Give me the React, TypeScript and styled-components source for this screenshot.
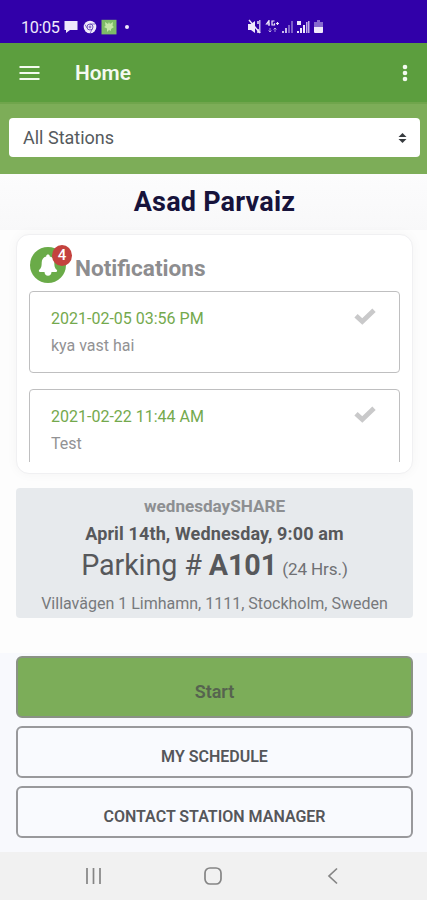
import React from "react";
import styled, { createGlobalStyle } from "styled-components";

const GlobalStyle = createGlobalStyle`
  * { box-sizing: border-box; }
  body { margin: 0; background: #fdfdfe; font-family: Roboto, "Liberation Sans", sans-serif; }
  button { font-family: inherit; }
`;

const Screen = styled.div`
  width: 427px;
  height: 900px;
  display: flex;
  flex-direction: column;
  overflow: hidden;
  background: #fdfdfd;
`;

const StatusBar = styled.div`
  height: 43px;
  flex: none;
  display: flex;
  justify-content: space-between;
  padding: 17px 103px 0 21px;
  background: #3100a9;
  color: #efe9fb;
`;

const StatusGroup = styled.div<{ $gap: number }>`
  display: flex;
  align-items: center;
  gap: ${(p) => p.$gap}px;
  height: 20px;
`;

const Clock = styled.span`
  font-size: 16.3px;
  line-height: 20px;
  padding-top: 2px;
  letter-spacing: -0.4px;
`;

const Icon = styled.svg`
  display: block;
  flex: none;
`;

const AppBar = styled.header`
  height: 59px;
  flex: none;
  display: flex;
  align-items: center;
  padding: 0 19px;
  background: #5c9e3e;
  color: #f4faf0;
`;

const AppTitle = styled.h1`
  flex: 1;
  margin: 1px 0 0 35px;
  font-size: 20.9px;
  font-weight: 600;
  line-height: 26px;
`;

const FilterBar = styled.div`
  height: 72px;
  flex: none;
  padding: 14px 7px 0 9px;
  background: #7dad58;
  border-top: 2px solid #70a54c;
`;

const StationSelect = styled.div`
  height: 39px;
  display: flex;
  align-items: center;
  justify-content: space-between;
  padding: 0 13px 0 14px;
  border-radius: 4px;
  background: #fff;
  color: #555a5d;
  font-size: 18px;
`;

const UserName = styled.h2`
  margin: 0;
  height: 56px;
  flex: none;
  padding-left: 2px;
  background: linear-gradient(#fcfcfd, #f8f8f9);
  color: #17133b;
  font-size: 27px;
  font-weight: 700;
  letter-spacing: 0.2px;
  line-height: 56px;
  text-align: center;
`;

const Content = styled.main`
  flex: 1;
  display: flex;
  flex-direction: column;
  gap: 14px;
  padding: 4px 14px 0 16px;
`;

const NotificationCard = styled.section`
  height: 240px;
  padding: 11px 12px 0;
  border: 1px solid #f0f0f2;
  border-radius: 13px;
  background: #fff;
  box-shadow: 0 0 12px rgba(40, 40, 60, 0.04);
`;

const CardHeader = styled.div`
  height: 45px;
  display: flex;
  gap: 9px;
  padding-left: 1px;
`;

const BellBadge = styled.div`
  position: relative;
  width: 36px;
  height: 36px;
  margin-top: 1px;
  display: flex;
  align-items: center;
  justify-content: center;
  border-radius: 50%;
  background: #6aab48;
  color: #fff;
`;

const Count = styled.span`
  position: absolute;
  top: -2px;
  left: 22px;
  width: 20px;
  height: 21px;
  border-radius: 50%;
  background: #c4423e;
  color: #fff;
  font-size: 15px;
  font-weight: 500;
  line-height: 21px;
  text-align: center;
`;

const CardTitle = styled.h3`
  margin: 9px 0 0;
  color: #8d8d8f;
  font-size: 22.6px;
  font-weight: 700;
  line-height: 28px;
`;

const NotificationList = styled.div`
  height: 171px;
  display: flex;
  flex-direction: column;
  gap: 16px;
  overflow: hidden;
`;

const NotificationItem = styled.article`
  height: 82px;
  flex: none;
  display: flex;
  justify-content: space-between;
  padding: 13px 23px 0 21px;
  border: 1px solid #bfbfc0;
  border-radius: 4px;
`;

const NotificationText = styled.p<{ $date?: boolean }>`
  margin: 0;
  color: ${(p) => (p.$date ? "#74a94d" : "#929294")};
  font-size: 16px;
  line-height: 27px;
`;

const ParkingCard = styled.section`
  height: 130px;
  display: flex;
  flex-direction: column;
  align-items: center;
  padding-top: 5px;
  border-radius: 4px;
  background: #e7eaed;
  color: #57585b;
  white-space: nowrap;
`;

const ShareName = styled.div`
  font-size: 17.1px;
  font-weight: 700;
  line-height: 27px;
  color: #8d8f92;
`;

const ParkingDate = styled.div`
  font-size: 18px;
  font-weight: 700;
  letter-spacing: 0.13px;
  line-height: 28px;
`;

const ParkingSpot = styled.div`
  font-size: 28.7px;
  line-height: 34px;
  letter-spacing: -0.1px;
  b { font-weight: 700; }
  small { margin-left: -2px; font-size: 17.1px; color: #707174; }
`;

const Address = styled.div`
  margin-top: 4px;
  font-size: 16px;
  line-height: 27px;
  color: #77797c;
`;

const Actions = styled.footer`
  height: 199px;
  flex: none;
  display: flex;
  flex-direction: column;
  padding: 3px 14px 0 16px;
  gap: 8px;
  background: #f8f9fd;
`;

const ActionButton = styled.button<{ $primary?: boolean }>`
  height: ${(p) => (p.$primary ? 62 : 52)}px;
  flex: none;
  padding: 8px 0 0;
  border: 2px solid ${(p) => (p.$primary ? "#8a9285" : "#99999c")};
  border-radius: 6px;
  background: ${(p) => (p.$primary ? "#7cad59" : "#f9fafe")};
  color: ${(p) => (p.$primary ? "#56634f" : "#55565a")};
  font-size: ${(p) => (p.$primary ? 18 : 16)}px;
  font-weight: 600;
`;

const NavBar = styled.nav`
  height: 48px;
  flex: none;
  display: flex;
  align-items: center;
  justify-content: space-between;
  padding: 0 88px 0 85px;
  background: #f1f1f1;
  color: #858585;
`;

const HomeIcon = styled(Icon)`
  margin-right: 3px;
`;

const notifications = [
  { date: "2021-02-05 03:56 PM", text: "kya vast hai" },
  { date: "2021-02-22 11:44 AM", text: "Test" },
];

const CheckMark = () => (
  <Icon width="22" height="20" viewBox="0 0 22 20" aria-label="Mark as read">
    <path d="M2 10.700 8.300 16.500 20 5.200" fill="none" stroke="#c9c9ca" strokeWidth="4.800" />
  </Icon>
);

const LeftStatusIcons = () => (
  <>
    <Icon width="14" height="14" viewBox="0 0 14 14">
      <path d="M.5 1h13v9H6l-4 3v-3H.5z" fill="currentColor" />
    </Icon>
    <Icon width="14" height="14" viewBox="0 0 14 14">
      <circle cx="7" cy="7" r="6.3" fill="currentColor" />
      <circle cx="7" cy="7" r="3" fill="none" stroke="#6c50bd" strokeWidth="1" />
      <path d="M7 4h5M4.400 8.500 2 4.600M9.500 8.500 7.200 13" stroke="#6c50bd" strokeWidth=".8" />
      <circle cx="7" cy="7" r="1.400" fill="#8e76cd" />
    </Icon>
    <Icon width="16" height="16" viewBox="0 0 16 16">
      <path d="M.5.8h15v14.600H.5z" fill="#7dbb68" />
      <path d="m4 3 3 2 1-2 1 2 3-2-.5 4 1.500 1-3 2v2L8 11l-2 2V9.500L3 8l1.500-1z" fill="#c5e7a8" />
    </Icon>
    <Icon width="10" height="14" viewBox="0 0 10 14">
      <circle cx="5" cy="7" r="2" fill="currentColor" />
    </Icon>
  </>
);

const RightStatusIcons = () => (
  <Icon width="76" height="16" viewBox="0 0 76 16" fill="currentColor">
    <path d="M0 5h3l4-3v12l-4-3H0z" />
    <path d="m1 1 11 13" stroke="currentColor" strokeWidth="1.400" />
    <path d="M9 2h2v3H9zm0 8h2v4H9zM11 1h1.500v13H11z" opacity=".75" />
    <path d="M21 1.500 18.500 5H22M21 1v6M26.500 2H24v4h2.500V4.300M28 4.500h3M29.500 3v3" fill="none" stroke="currentColor" strokeWidth="1.200" />
    <path d="M22 9v4m-1.500-1.500L22 13l1.500-1.500M27 13V9m-1.500 1.500L27 9l1.500 1.500" fill="none" stroke="currentColor" opacity=".6" />
    <path d="M34 12h2v2h-2zM37 9h2v5h-2z" opacity=".8" />
    <path d="M40 6h2v8h-2zM43 2h2v12h-2z" opacity=".4" />
    <path d="M49 2h4v4h-4zM49 12h2v2h-2zM52 9h2v5h-2zM55 6h2v8h-2z" />
    <path d="M58 3h1.500v11H58zM60 2h1.500v12H60z" opacity=".75" />
    <path d="M69 1h3v2h3v5h-9V3h3z" opacity=".45" />
    <path d="M66 8h9v5q0 1-1 1h-7q-1 0-1-1z" />
  </Icon>
);

export default function App() {
  return (
    <>
      <GlobalStyle />
      <Screen>
        <StatusBar>
          <StatusGroup $gap={4.5}>
            <Clock>10:05</Clock>
            <LeftStatusIcons />
          </StatusGroup>
          <StatusGroup $gap={0}>
            <RightStatusIcons />
          </StatusGroup>
        </StatusBar>
        <AppBar>
          <Icon width="21" height="16" viewBox="0 0 21 16" aria-label="Menu">
            <path d="M.5 2h20M.5 8h20M.5 14h20" stroke="currentColor" strokeWidth="2.200" />
          </Icon>
          <AppTitle>Home</AppTitle>
          <Icon width="6" height="20" viewBox="0 0 6 20" fill="currentColor" aria-label="More">
            <circle cx="3" cy="4" r="2.300" />
            <circle cx="3" cy="10" r="2.300" />
            <circle cx="3" cy="16" r="2.300" />
          </Icon>
        </AppBar>
        <FilterBar>
          <StationSelect>
            All Stations
            <Icon width="9" height="12" viewBox="0 0 9 12" fill="#373b3f">
              <path d="M4.500 1 8.500 5h-8zM4.500 11l4-4h-8z" />
            </Icon>
          </StationSelect>
        </FilterBar>
        <UserName>Asad Parvaiz</UserName>
        <Content>
          <NotificationCard>
            <CardHeader>
              <BellBadge>
                <Icon width="22" height="24" viewBox="0 0 22 24" fill="currentColor">
                  <path d="M11 1.500c1.200 0 1.800.8 1.800 2 3 .8 4.500 3 4.500 6 0 4.500.9 6 2.400 7.300.9.900.4 2.200-.8 2.200H3.100c-1.200 0-1.700-1.300-.8-2.200 1.500-1.300 2.400-2.800 2.400-7.300 0-3 1.500-5.200 4.500-6 0-1.200.6-2 1.800-2zM7.500 19h7c0 2.200-1.500 3.700-3.500 3.700S7.500 21.200 7.500 19z" />
                </Icon>
                <Count>4</Count>
              </BellBadge>
              <CardTitle>Notifications</CardTitle>
            </CardHeader>
            <NotificationList>
              {notifications.map((n) => (
                <NotificationItem key={n.date}>
                  <div>
                    <NotificationText $date>{n.date}</NotificationText>
                    <NotificationText>{n.text}</NotificationText>
                  </div>
                  <CheckMark />
                </NotificationItem>
              ))}
            </NotificationList>
          </NotificationCard>
          <ParkingCard>
            <ShareName>wednesdaySHARE</ShareName>
            <ParkingDate>April 14th, Wednesday, 9:00 am</ParkingDate>
            <ParkingSpot>
              Parking # <b>A101</b> <small>(24 Hrs.)</small>
            </ParkingSpot>
            <Address>Villavägen 1 Limhamn, 1111, Stockholm, Sweden</Address>
          </ParkingCard>
        </Content>
        <Actions>
          <ActionButton $primary>Start</ActionButton>
          <ActionButton>MY SCHEDULE</ActionButton>
          <ActionButton>CONTACT STATION MANAGER</ActionButton>
        </Actions>
        <NavBar>
          <Icon width="17" height="18" viewBox="0 0 17 18">
            <path d="M2 1v16M8.500 1v16M15 1v16" stroke="currentColor" strokeWidth="1.700" />
          </Icon>
          <HomeIcon width="18" height="18" viewBox="0 0 18 18">
            <rect x="1" y="1" width="16" height="16" rx="5" fill="none" stroke="currentColor" strokeWidth="1.700" />
          </HomeIcon>
          <Icon width="12" height="18" viewBox="0 0 12 18">
            <path d="M10 1.500 2 9l8 7.500" fill="none" stroke="currentColor" strokeWidth="1.700" />
          </Icon>
        </NavBar>
      </Screen>
    </>
  );
}
